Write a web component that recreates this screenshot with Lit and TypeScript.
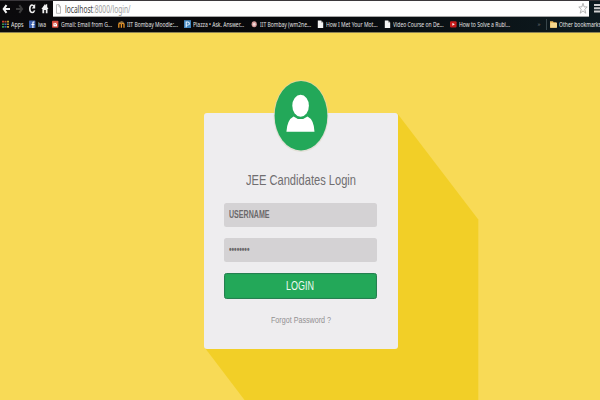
import { LitElement, html, css, svg } from "lit";
import { customElement, property } from "lit/decorators.js";
import { classMap } from "lit/directives/class-map.js";

/** A single line of text condensed or stretched to an exact width. */
@customElement("fit-text")
class FitText extends LitElement {
  @property({ type: Number }) width = 50;

  static styles = css`
    :host { display: block; flex: none; white-space: nowrap; }
    .line { display: inline-block; transform-origin: 0 50%; }
  `;

  firstUpdated() {
    const line = this.renderRoot.querySelector(".line") as HTMLElement;
    this.style.width = `${this.width}px`;
    line.style.transform = `scaleX(${this.width / line.getBoundingClientRect().width})`;
  }

  render() {
    return html`<span class="line"><slot></slot></span>`;
  }
}

const page = svg`<path d="M.8 .5H4L6.2 3V9.5H.8Z" fill="#f4f4f4"/><path d="M4 .5V3H6.2" fill="#999"/>`;

const icons: Record<string, unknown> = {
  apps: svg`<path d="M0 1h2v2H0z" fill="#c8402f"/><path d="M2.5 1h2v2h-2z" fill="#b34b2c"/><path d="M5 1h2v2H5z" fill="#b89a2c"/><path d="M0 4h2v2H0z" fill="#379648"/><path d="M2.5 4h2v2h-2z" fill="#3568a8"/><path d="M5 4h2v2H5z" fill="#b98d2d"/><path d="M0 7h2v2H0z" fill="#379648"/><path d="M2.5 7h2v2h-2z" fill="#3568a8"/><path d="M5 7h2v2H5z" fill="#c6a137"/>`,
  facebook: svg`<rect y=".5" width="6.4" height="9" rx=".6" fill="#3d62b0"/><path d="M5.4 2.3H4.5Q3.9 2.3 3.9 3.3V9.5M2.4 5.2H5.4" stroke="#fff" stroke-width="1.1" fill="none"/>`,
  gmail: svg`<rect y="1" width="6.4" height="8" rx=".7" fill="#d74a3d"/><path d="M1.4 3.4H5V7.5H1.4Z" fill="#fff"/><path d="M1.4 3.6L3.2 5.5L5 3.6" stroke="#d74a3d" stroke-width=".7" fill="none"/>`,
  moodle: svg`<path d="M.8 9V5Q.8 4 2 4T3.4 5V9M3.4 5Q3.4 4 4.7 4T6 5V9" stroke="#e99427" stroke-width="1.3" fill="none"/><path d="M0 3.3L3.6 1.2L6.4 2.6L3.6 4Z" fill="#8a6d3e"/>`,
  piazza: svg`<rect y=".2" width="7" height="9.6" fill="#3f83bd"/><path d="M2.2 8.5V2.3H3.6Q5.3 2.3 5.3 4.2T3.6 6H2.5" stroke="#e8f4ff" stroke-width="1.1" fill="none"/>`,
  seal: svg`<ellipse cx="3.2" cy="5" rx="2.6" ry="3.4" fill="#d59a9a"/><ellipse cx="3.2" cy="5" rx="1.3" ry="1.8" fill="#f2dddd"/>`,
  page,
  video: svg`<rect y="1.5" width="6.6" height="7.2" rx="1.2" fill="#c51c1c"/><path d="M2.4 3.4L4.8 5.1L2.4 6.8Z" fill="#fff"/>`,
  folder: svg`<path d="M0 1.5H3L3.6 2.5H6.6V9H0Z" fill="#e9b95f"/><path d="M.4 3.5H7V9H.4Z" fill="#f6d88e"/>`,
};

const bookmarks = [
  { icon: "apps", text: "Apps", width: 12.5, slot: 26.5 },
  { icon: "facebook", text: "iwa", width: 8, slot: 23 },
  { icon: "gmail", text: "Gmail: Email from G...", width: 51, slot: 66.5 },
  { icon: "moodle", text: "IIT Bombay Moodle:...", width: 51, slot: 66 },
  { icon: "piazza", text: "Piazza • Ask. Answer...", width: 51, slot: 66.5 },
  { icon: "seal", text: "IIT Bombay (wm2ne...", width: 51, slot: 66.5 },
  { icon: "page", text: "How I Met Your Mot...", width: 51.5, slot: 66.5 },
  { icon: "page", text: "Video Course on De...", width: 50.5, slot: 66 },
  { icon: "video", text: "How to Solve a Rubi...", width: 51, slot: 88 },
];

@customElement("browser-bar")
class BrowserBar extends LitElement {
  static styles = css`
    :host {
      display: flex; flex-direction: column; box-sizing: border-box; height: 33px;
      background: linear-gradient(90deg, #0b0a0c, #07080b 50%, #0d1a1f);
      border-bottom: 1px solid #8d8354;
      font-family: "Noto Sans", "Open Sans", sans-serif; overflow: hidden; position: relative;
    }
    .tools {
      display: flex; height: 17px; box-sizing: border-box; padding-top: 1px;
      background: linear-gradient(#3a373b 0 1px, transparent 1px);
    }
    .nav { flex: none; width: 53px; height: 16px; }
    .address {
      display: flex; align-items: center; width: 536px; height: 16px; box-sizing: border-box;
      padding: 0 1px 0 4px; background: #fefefe; border: solid #a6a6a6; border-width: 0 0 1px 0;
      font-size: 10px; line-height: 14px; color: #9b9b9b; gap: 3px;
    }
    .host { color: #444; }
    .doc { width: 5px; height: 10px; flex: none; margin-left: -1px; }
    .url { margin-left: 1px; }
    .star { width: 10px; height: 13px; margin-left: auto; }
    .menu { width: 6px; height: 11px; margin: 2px 0 0 5px; }
    .marks {
      display: flex; align-items: center; height: 14px; padding: 0 0 0 2px;
      font-size: 7.5px; line-height: 12px; color: #e3e3e3;
    }
    .mark { display: flex; align-items: center; gap: 2px; flex: none; box-sizing: border-box; }
    .icon { width: 7px; height: 8.5px; flex: none; }
    .more { width: 8px; color: #777; flex: none; font-size: 6px; }
    .rule { width: 1px; height: 11px; background: #39464b; flex: none; margin-right: 3px; }
    .ghosts { position: absolute; left: 349px; bottom: -1px; display: flex; gap: 6px; }
    .ghost { height: 1.5px; width: 13px; background: #c9c7ac; }
    .short { width: 9px; background: #8d8d80; }
  `;

  icon(name: string) {
    return html`<svg class="icon" viewBox="0 0 7 10" preserveAspectRatio="none">${icons[name]}</svg>`;
  }

  render() {
    return html`
      <div class="tools">
        <svg class="nav" viewBox="0 0 53 16">
          <path d="M10 8H4M6.5 4.2L3.7 8L6.5 11.8" stroke="#f5f5f5" stroke-width="2" fill="none"/>
          <path d="M16 8H22M19.3 4.2L22.1 8L19.3 11.8" stroke="#3c3c3c" stroke-width="2" fill="none"/>
          <path d="M34 5.3Q33.1 3.9 31.8 4Q29.8 4.4 29.8 7.8T32 11.5Q34 11.5 34.6 9.4" stroke="#eee" stroke-width="1.6" fill="none"/>
          <path d="M35.2 2.8V7.4H31.8Z" fill="#eee"/>
          <path d="M41.4 8L45 3L46 4.4V3.2H47.2V6.1L48.5 8H47.5V12.2H45.8V9H44.2V12.2H42.4V8Z" fill="#f2f2f2"/>
        </svg>
        <div class="address">
          <svg class="doc" viewBox="0 0 5 10"><path d="M.5 .7H3L4.5 2.8V9.3H.5Z M3 .7V3H4.5" fill="#fff" stroke="#a8a8a8" stroke-width=".8"/></svg>
          <fit-text class="url" width="65.5"><span class="host">localhost</span>:8000/login/</fit-text>
          <svg class="star" viewBox="0 0 10 13"><path d="M5 1.3L6.1 4.9H9.2L6.8 7.4L7.8 11.2L5 8.9L2.2 11.2L3.2 7.4L.8 4.9H3.9Z" fill="#fff" stroke="#aaa" stroke-width=".9"/></svg>
        </div>
        <svg class="menu" viewBox="0 0 6 11"><path d="M0 2H6M0 5.3H6M0 8.6H6" stroke="#d0d0d0" stroke-width="2"/></svg>
      </div>
      <div class="marks">
        ${bookmarks.map((b) => html`
          <div class="mark" style="width:${b.slot}px">
            ${this.icon(b.icon)}<fit-text width=${b.width}>${b.text}</fit-text>
          </div>`)}
        <span class="more">»</span>
        <span class="rule"></span>
        <div class="mark">${this.icon("folder")}<fit-text width="42">Other bookmarks</fit-text></div>
      </div>
      <div class="ghosts">
        ${[false, true, false].map((short) => html`<i class=${classMap({ ghost: true, short })}></i>`)}
      </div>
    `;
  }
}

@customElement("login-card")
class LoginCard extends LitElement {
  static styles = css`
    :host {
      display: flex; flex-direction: column; align-items: center; position: relative;
      width: 194px; height: 236px; box-sizing: border-box; padding-top: 57px;
      background: #eeedef; border-radius: 3px; color: #706e70;
      font-family: "Liberation Sans", Arial, sans-serif;
    }
    .avatar { position: absolute; left: 68px; top: -35px; width: 58px; height: 75px; }
    .title { font-size: 15px; line-height: 19px; margin-bottom: 14px; }
    .field {
      display: flex; align-items: center; width: 153px; height: 24px; box-sizing: border-box;
      margin: 0 0 11px -2px; padding-left: 5.5px; background: #d4d2d4; border-radius: 2.5px;
      font-size: 10px; line-height: 12px; font-weight: bold; color: #6b696b;
    }
    .field fit-text { margin-top: -1px; }
    .button {
      display: flex; align-items: center; justify-content: center; width: 153px; height: 26px;
      box-sizing: border-box; background: #23a859; border: 1px solid #258050; border-radius: 2.5px;
      color: #eefbf2; font-size: 12px; margin-left: -2px; box-shadow: inset 0 0 1px #258050;
    }
    .forgot { font-size: 9.5px; line-height: 12px; margin-top: 15px; color: #929092; }
  `;

  render() {
    return html`
      <svg class="avatar" viewBox="0 0 58 75">
        <ellipse cx="29" cy="38" rx="27.4" ry="36" fill="#d8d5c4" opacity=".6"/>
        <ellipse cx="29" cy="37.7" rx="26.4" ry="34.8" fill="#23a859"/>
        <path d="M14.4 53.7Q15.2 41.5 21.6 38.4Q28.4 43.8 35.5 38.4Q42 41.5 42.5 53.7Z" fill="#fff"/>
        <ellipse cx="28.6" cy="27.8" rx="8.3" ry="11" fill="#fff"/>
      </svg>
      <fit-text class="title" width="110">JEE Candidates Login</fit-text>
      <div class="field"><fit-text width="40.5">USERNAME</fit-text></div>
      <div class="field"><fit-text width="20.5">••••••••</fit-text></div>
      <div class="button"><fit-text width="28">LOGIN</fit-text></div>
      <fit-text class="forgot" width="60">Forgot Password ?</fit-text>
    `;
  }
}

@customElement("app-root")
class AppRoot extends LitElement {
  static styles = css`
    :host { display: flex; flex-direction: column; width: 600px; height: 400px; overflow: hidden; background: #f8da56; }
    .stage { position: relative; flex: 1; padding: 80px 0 0 204px; }
    .shade { position: absolute; left: 0; top: 0; width: 600px; height: 367px; }
  `;

  render() {
    return html`
      <browser-bar></browser-bar>
      <div class="stage">
        <svg class="shade" viewBox="0 33 600 367"><path d="M397 113L478.3 219.5V400H244.5L205 348Z" fill="#f2cf27"/></svg>
        <login-card></login-card>
      </div>
    `;
  }
}
